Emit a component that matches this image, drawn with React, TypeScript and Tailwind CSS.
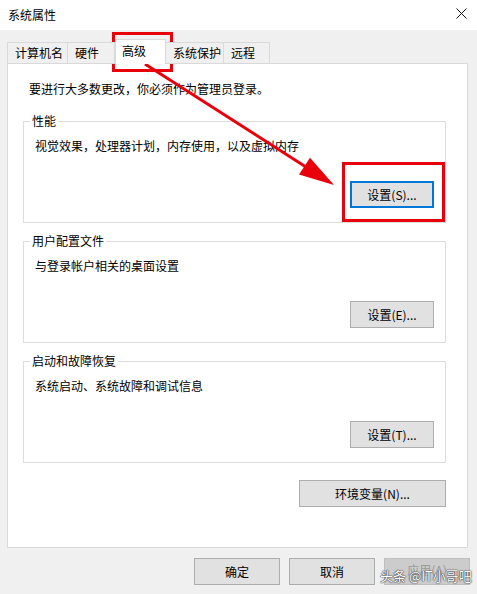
import React from "react";

const tabs = [
  { label: "计算机名", w: "w-[61px]" },
  { label: "硬件", w: "w-[47px]" },
  { label: "高级", w: "w-[51px]", active: true },
  { label: "系统保护", w: "w-[58px]" },
  { label: "远程", w: "w-[46px]" },
];

const Button = ({
  children,
  className = "",
  focused = false,
  disabled = false,
}: {
  children: React.ReactNode;
  className?: string;
  focused?: boolean;
  disabled?: boolean;
}) => (
  <div
    className={
      "flex items-center justify-center h-[27px] text-[12px] leading-[16px] " +
      (focused
        ? "border-2 border-[#0078d7] bg-[#e1e1e1] text-black "
        : disabled
        ? "border border-[#bfbfbf] bg-[#cccccc] text-[#9a9a9a] "
        : "border border-[#adadad] bg-[#e1e1e1] text-black ") +
      className
    }
  >
    {children}
  </div>
);

const Group = ({
  title,
  desc,
  button,
  focused,
}: {
  title: string;
  desc: string;
  button: string;
  focused?: boolean;
}) => (
  <fieldset className="w-[423px] ml-[15px] border border-[#dcdcdc] pb-[14px]">
    <legend className="ml-[6px] px-[2px] text-[12px] leading-[16px] text-black">
      {title}
    </legend>
    <p className="mt-[9px] pl-[11px] text-[12px] leading-[16px] text-black">{desc}</p>
    <div className="mt-[27px] flex justify-end pr-[11px]">
      <Button className="w-[84px]" focused={focused}>
        {button}
      </Button>
    </div>
  </fieldset>
);

export default function App() {
  return (
    <div className="relative w-[477px] h-[594px] overflow-hidden bg-[#f0f0f0] font-['Microsoft_YaHei','Noto_Sans_CJK_SC',sans-serif] text-black">
      {/* Title bar */}
      <div className="flex h-[30px] items-center justify-between bg-white pl-[8px] pr-[10px]">
        <span className="text-[12px] leading-[16px]">系统属性</span>
        <svg width="11" height="11" viewBox="0 0 11 11" className="-mt-[3px]">
          <path d="M0.5 0.5 L10.5 10.5 M10.5 0.5 L0.5 10.5" stroke="#111" strokeWidth="1" />
        </svg>
      </div>

      {/* Tabs */}
      <div className="relative z-10 -mb-px flex items-end pl-[7px] pt-[9px]">
        {tabs.map((t) =>
          t.active ? (
            <div
              key={t.label}
              className={`${t.w} h-[25px] border border-b-0 border-[#d9d9d9] bg-white pl-[6px] pt-[3px] text-[12px] leading-[16px]`}
            >
              {t.label}
            </div>
          ) : (
            <div
              key={t.label}
              className={`${t.w} h-[22px] border border-l-0 first:border-l border-[#d9d9d9] bg-[#f0f0f0] pl-[7px] pt-[2px] text-[12px] leading-[16px]`}
            >
              {t.label}
            </div>
          )
        )}
      </div>

      {/* Tab page */}
      <div className="ml-[7px] flex h-[485px] w-[461px] flex-col border border-[#d9d9d9] bg-white">
        <p className="pl-[21px] pt-[17px] text-[12px] leading-[16px]">
          要进行大多数更改，你必须作为管理员登录。
        </p>
        <div className="mt-[16px]">
          <Group title="性能" desc="视觉效果，处理器计划，内存使用，以及虚拟内存" button="设置(S)..." focused />
        </div>
        <div className="mt-[10px]">
          <Group title="用户配置文件" desc="与登录帐户相关的桌面设置" button="设置(E)..." />
        </div>
        <div className="mt-[10px]">
          <Group title="启动和故障恢复" desc="系统启动、系统故障和调试信息" button="设置(T)..." />
        </div>
        <div className="mt-[17px] flex justify-end pr-[21px]">
          <Button className="w-[147px]">环境变量(N)...</Button>
        </div>
      </div>

      {/* Dialog buttons */}
      <div className="mt-[10px] flex justify-end gap-[9px] pr-[7px]">
        <Button className="w-[86px]">确定</Button>
        <Button className="w-[86px]">取消</Button>
        <Button className="w-[86px] items-start pt-[3px]" disabled>
          应用(A)
        </Button>
      </div>

      {/* Annotations */}
      <div className="pointer-events-none absolute left-[112px] top-[32px] h-[40px] w-[61px] border-[3px] border-[#e8000b]" />
      <div className="pointer-events-none absolute left-[342px] top-[162px] h-[60px] w-[103px] border-[3px] border-[#e8000b]" />
      <svg className="pointer-events-none absolute left-0 top-0" width="477" height="594">
        <line x1="145" y1="64" x2="306" y2="167" stroke="#e8000b" strokeWidth="3" />
        <polygon points="334,185 299,174.5 310,157.7" fill="#e8000b" />
      </svg>

      {/* Watermark */}
      <div className="pointer-events-none absolute left-[380px] top-[567px] text-[13px] leading-[18px] text-white [text-shadow:0_0_1px_#333,0_0_1px_#333,0_0_2px_#666]">
        头条 @IT小哥吧
      </div>
    </div>
  );
}
